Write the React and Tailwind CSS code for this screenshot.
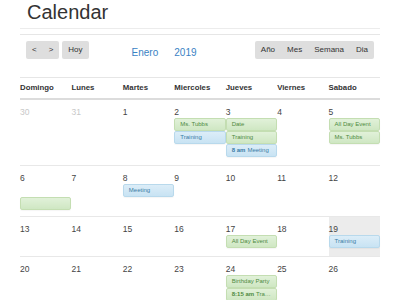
import React from "react";

// Month view, January 2019 (Spanish labels)

const DAYS = ["Domingo", "Lunes", "Martes", "Miercoles", "Jueves", "Viernes", "Sabado"];

const WEEKS = [
  {
    height: "h-[65px]",
    cells: [
      { n: 30, muted: true },
      { n: 31, muted: true },
      { n: 1 },
      { n: 2, events: [{ c: "g", label: "Ms. Tubbs" }, { c: "b", label: "Training" }] },
      {
        n: 3,
        events: [
          { c: "g", label: "Date" },
          { c: "g", label: "Training" },
          { c: "b", time: "8 am", label: "Meeting" },
        ],
      },
      { n: 4 },
      { n: 5, events: [{ c: "g", label: "All Day Event" }, { c: "g", label: "Ms. Tubbs" }] },
    ],
  },
  {
    height: "h-[51px]",
    cells: [
      { n: 6, events: [{ spacer: true }, { c: "g", label: "" }] },
      { n: 7 },
      { n: 8, events: [{ c: "b", label: "Meeting" }] },
      { n: 9 },
      { n: 10 },
      { n: 11 },
      { n: 12 },
    ],
  },
  {
    height: "h-[40px]",
    cells: [
      { n: 13 },
      { n: 14 },
      { n: 15 },
      { n: 16 },
      { n: 17, events: [{ c: "g", label: "All Day Event" }] },
      { n: 18 },
      { n: 19, today: true, events: [{ c: "b", label: "Training" }] },
    ],
  },
  {
    height: "h-[60px]",
    cells: [
      { n: 20 },
      { n: 21 },
      { n: 22 },
      { n: 23 },
      { n: 24, events: [{ c: "g", label: "Birthday Party" }, { c: "g", time: "8:15 am", label: "Training" }] },
      { n: 25 },
      { n: 26 },
    ],
  },
];

function Event({ ev }) {
  if (ev.spacer) return <div className="h-[13px]" />;
  const tone =
    ev.c === "b"
      ? "bg-linear-to-b from-[#dcedf8] to-[#c8e3f3] border-[#b8d9ec] text-[#3a7ca5]"
      : "bg-linear-to-b from-[#e1f1d9] to-[#cfe7c3] border-[#c4deb2] text-[#4e8a3e]";
  return (
    <div
      className={`h-[13px] border rounded-[2px] px-[5px] text-[6px] leading-[11px] truncate shadow-[0_1px_1px_rgba(0,0,0,0.04)] ${tone}`}
    >
      {ev.time && <span className="font-bold mr-[2px]">{ev.time}</span>}
      {ev.label}
    </div>
  );
}

function Cell({ cell }) {
  return (
    <div className={`pt-[7px] min-w-0 ${cell.today ? "bg-[#ececec]" : ""}`}>
      <div
        className={`h-[11px] leading-[11px] text-[8.5px] ${cell.muted ? "text-[#c8c8c8]" : "text-[#444]"}`}
      >
        {cell.n}
      </div>
      {cell.events && (
        <div className="flex flex-col">
          {cell.events.map((ev, i) => (
            <Event key={i} ev={ev} />
          ))}
        </div>
      )}
    </div>
  );
}

export default function App() {
  return (
    <div className="w-[400px] h-[300px] overflow-hidden bg-white font-['Liberation_Sans',Arial,sans-serif] text-[#333]">
      <div className="ml-[20px] w-[360px]">
        {/* Title */}
        <h1 className="mt-[1px] pl-[7px] text-[20px] leading-[23px] font-normal text-[#333]">Calendar</h1>
        <div className="mt-[4px] h-px bg-[#ececec]" />
        <div className="mt-[5px] h-px bg-[#e6e6e6]" />

        {/* Toolbar */}
        <div className="mt-[6px] flex items-start px-[6px] h-[18px]">
          <div className="flex bg-[#dedede] rounded-[2px] h-[18px] text-[8px] leading-[18px]">
            <button className="px-[6px]">&lt;</button>
            <button className="px-[6px]">&gt;</button>
          </div>
          <button className="ml-[3px] bg-[#dedede] rounded-[2px] h-[18px] px-[6px] text-[8px] leading-[18px]">
            Hoy
          </button>
          <a className="ml-[43px] mt-[6px] text-[10px] leading-[12px] text-[#3a82c4]">Enero</a>
          <a className="ml-[16px] mt-[6px] text-[10px] leading-[12px] text-[#3a82c4]">2019</a>
          <div className="ml-auto flex bg-[#dedede] rounded-[2px] h-[18px] text-[8px] leading-[18px]">
            <button className="px-[6px]">Año</button>
            <button className="px-[6px]">Mes</button>
            <button className="px-[6px]">Semana</button>
            <button className="px-[6px]">Dia</button>
          </div>
        </div>

        {/* Grid */}
        <div className="mt-[18px] border-t border-[#e6e6e6]">
          <div className="grid grid-cols-7 h-[22px] items-center border-b-2 border-[#dcdcdc]">
            {DAYS.map((d) => (
              <div key={d} className="text-[7.8px] font-bold text-[#333]">
                {d}
              </div>
            ))}
          </div>
          {WEEKS.map((w, wi) => (
            <div
              key={wi}
              className={`grid grid-cols-7 ${w.height} ${wi > 0 ? "border-t border-[#e8e8e8]" : ""}`}
            >
              {w.cells.map((c, ci) => (
                <Cell key={ci} cell={c} />
              ))}
            </div>
          ))}
        </div>
      </div>
    </div>
  );
}
